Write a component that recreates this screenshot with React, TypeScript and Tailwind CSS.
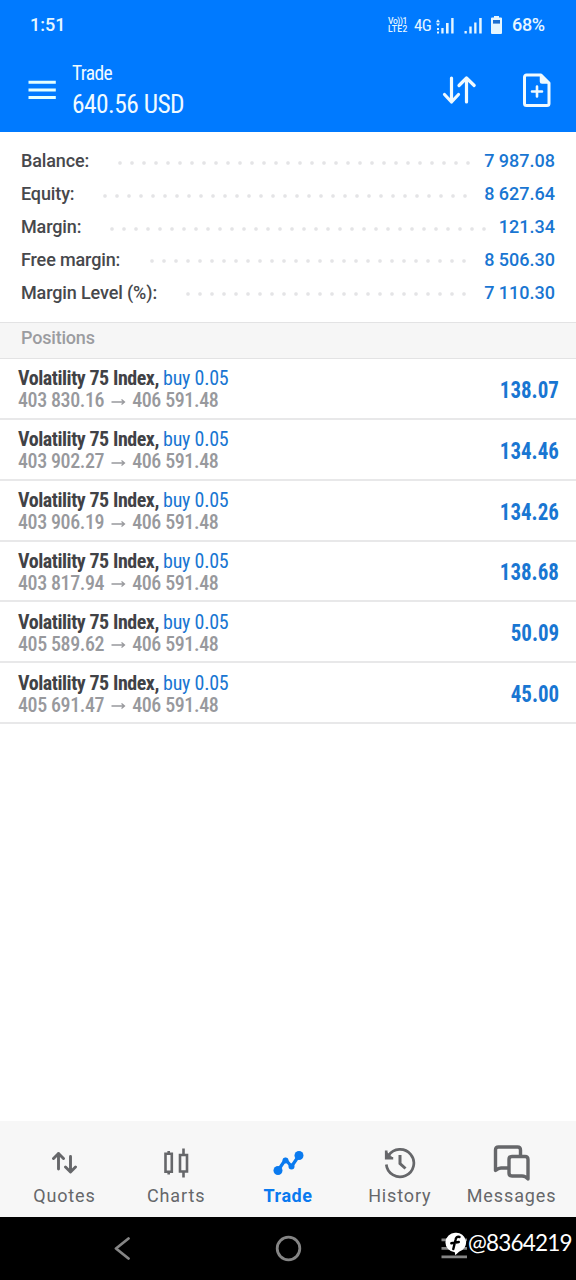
import React from 'react';

const summary = [
  { label: 'Balance:', value: '7 987.08', lead: 'w-[92.5px]', dots: 'w-[360px]' },
  { label: 'Equity:', value: '8 627.64', lead: 'w-[78px]', dots: 'w-[372px]' },
  { label: 'Margin:', value: '121.34', lead: 'w-[84.5px]', dots: 'w-[384px]' },
  { label: 'Free margin:', value: '8 506.30', lead: 'w-[124.5px]', dots: 'w-[324px]' },
  { label: 'Margin Level (%):', value: '7 110.30', lead: 'w-[160.5px]', dots: 'w-[288px]' },
];

const positions = [
  { open: '403 830.16', profit: '138.07' },
  { open: '403 902.27', profit: '134.46' },
  { open: '403 906.19', profit: '134.26' },
  { open: '403 817.94', profit: '138.68' },
  { open: '405 589.62', profit: '50.09' },
  { open: '405 691.47', profit: '45.00' },
];

const condensed = "font-['Roboto_Condensed','Roboto',sans-serif] [font-stretch:condensed]";

function StatusBar() {
  return (
    <div className="flex h-[50px] items-center pl-[30px] pr-[30px] text-[#e6f6ff]">
      <span className="text-[18px] font-medium leading-none">1:51</span>
      <div className="ml-auto flex items-center">
        <div className="flex w-[20px] flex-col whitespace-nowrap text-[8.5px] font-medium leading-[8px]">
          <span className="tracking-[-0.4px]">Vo))1</span>
          <span className="tracking-[0.3px]">LTE2</span>
        </div>
        <span className={`${condensed} ml-[6px] w-[17px] whitespace-nowrap text-[17px] leading-none tracking-[-0.7px]`}>4G</span>
        <svg className="ml-[5px] block" width="18" height="17" viewBox="0 0 18 17" fill="currentColor">
          <path d="M0 5.200 2 2.300l2 2.900zM0 6.600h4L2 9.200zM1 11h2v2H1zM1 14.500h2v2H1zM5.300 11h2.300v5.500H5.300zM10 6h2.600v10.500H10zM15.200 1h2.400v15.500h-2.400z" />
        </svg>
        <svg className="ml-[10px] block" width="18" height="17" viewBox="0 0 18 17" fill="currentColor">
          <path d="M0.500 14h2.300v2.500H0.500zM5.300 9.500h2.400v7H5.300zM10.200 5.500h2.300v11h-2.300zM15.200 1h2.500v15.500h-2.500z" />
        </svg>
        <svg className="ml-[8px] block" width="13" height="20" viewBox="0 0 13 20">
          <path d="M4 1h5v2H4zM2 2.600h9a1 1 0 0 1 1 1V18a1 1 0 0 1-1 1H2a1 1 0 0 1-1-1V3.600a1 1 0 0 1 1-1z" fill="currentColor" />
          <path d="M3 5h7v3.600H3z" fill="#1d6fd0" />
        </svg>
        <span className="ml-[9px] w-[34px] whitespace-nowrap text-[18px] font-medium leading-none tracking-[-0.3px]">68%</span>
      </div>
    </div>
  );
}

function Header() {
  return (
    <header className="h-[132px] bg-[#007aff]">
      <StatusBar />
      <div className="flex h-[82px] items-start text-[#f0faff]">
        <svg className="ml-[28px] mt-[30px]" width="28" height="21" viewBox="0 0 28 21" fill="#e2ffff">
          <path d="M0.500 0.800h27.300v3H0.500zM0.500 8.500h27.300v3H0.500zM0.500 16h27.300v3H0.500z" />
        </svg>
        <div className={`${condensed} ml-[16px] flex flex-col`}>
          <span className="mt-[12px] text-[19.5px] leading-[23px] tracking-[-0.6px]">Trade</span>
          <span className="mt-[4px] text-[25.5px] leading-[30px] tracking-[-0.55px]">640.56 USD</span>
        </div>
        <svg className="ml-auto mt-[25px]" width="36" height="30" viewBox="0 0 36 30" fill="none" stroke="currentColor" strokeWidth="3.200" strokeLinecap="round" strokeLinejoin="round">
          <path d="M10.500 3v24M3.500 19.500l7 7.500 7-7.500M25.500 27V3M18 10.500 25.500 3l7.700 7.500" />
        </svg>
        <svg className="ml-[45px] mr-[24px] mt-[22px]" width="30" height="36" viewBox="0 0 30 36" fill="none" stroke="currentColor" strokeWidth="3" strokeLinejoin="round">
          <path d="M4.500 3H19l8 8v20.500a2 2 0 0 1-2 2H4.500a2 2 0 0 1-2-2V5a2 2 0 0 1 2-2z" />
          <path d="M18.500 3v6.500q0 1.500 1.500 1.500h7z" fill="currentColor" strokeWidth="1.500" />
          <path d="M15 14.500v10M10 19.500h10" strokeLinecap="round" strokeWidth="2.600" />
        </svg>
      </div>
    </header>
  );
}

function Summary() {
  return (
    <section className="h-[190px] pl-[21px] pr-[21px] pt-[13px]">
      {summary.map((row) => (
        <div key={row.label} className="flex h-[32.850px] items-center text-[18px] font-medium leading-none">
          <span className={`${row.lead} shrink-0 whitespace-nowrap tracking-[-0.130px] text-[#47484c]`}>{row.label}</span>
          <span className={`${row.dots} mt-[3px] h-[6px] shrink-0 bg-[radial-gradient(circle,#e4e4e6_1.300px,transparent_2.300px)] bg-[length:12px_6px]`} />
          <span className="ml-auto whitespace-nowrap text-[#1976d2]">{row.value}</span>
        </div>
      ))}
    </section>
  );
}

function Positions() {
  return (
    <section>
      <div className="flex h-[37px] items-center border-y-[1.5px] border-[#e3e3e4] bg-[#f6f6f6] pb-[5px] pl-[21px] text-[18px] font-medium leading-none tracking-[-0.200px] text-[#9b9ca0]">
        Positions
      </div>
      {positions.map((p) => (
        <div key={p.open} className={`${condensed} flex h-[60.850px] items-center border-b-2 border-[#e8e8e9] pl-[18px] pr-[17px]`}>
          <div className="flex flex-col pt-[2px] leading-[22px]">
            <span className="whitespace-nowrap text-[20px] font-bold tracking-[-0.450px] text-[#414246]">
              Volatility 75 Index, <span className="font-normal tracking-[-0.250px] text-[#1976d2]">buy 0.05</span>
            </span>
            <span className="flex items-center whitespace-nowrap text-[20px] font-medium tracking-[-0.400px] text-[#98999d]">
              {p.open}
              <svg className="ml-[7px] mr-[6px] mt-[3px]" width="15" height="8" viewBox="0 0 15 8" fill="none" stroke="currentColor" strokeWidth="1.300">
                <path d="M0.500 4h13M10.500 1.500 13.500 4l-3 2.500" />
              </svg>
              406 591.48
            </span>
          </div>
          <span className="ml-auto origin-right scale-x-[0.910] pt-[4px] text-[23px] font-bold leading-none text-[#1976d2]">{p.profit}</span>
        </div>
      ))}
    </section>
  );
}

function QuotesIcon() {
  return (
    <svg width="26" height="24" viewBox="0 0 26 24" fill="none" stroke="currentColor" strokeWidth="2.900" strokeLinecap="round" strokeLinejoin="round">
      <path d="M7.500 18V2.500M2.500 7.500l5-5 5 5M19.500 5.500V21M14.500 16l5 5 5-5" />
    </svg>
  );
}

function ChartsIcon() {
  return (
    <svg width="26" height="30" viewBox="0 0 26 30" fill="none" stroke="currentColor" strokeWidth="2.600">
      <path d="M2.500 5.800h6.300v18H2.500zM5.700 3v3M5.700 23.500v3M17 7h7v16.500h-7zM20.500 0.500V7M20.500 23.500v6" />
    </svg>
  );
}

function TradeIcon() {
  return (
    <svg width="32" height="26" viewBox="0 0 32 26" fill="currentColor">
      <path d="M6 20.500 13.500 9.500l6 7L27 5.500" fill="none" stroke="currentColor" strokeWidth="3.200" strokeLinejoin="round" />
      <circle cx="6" cy="20.500" r="4.500" />
      <circle cx="13.500" cy="10.500" r="3" />
      <circle cx="19.500" cy="16.500" r="3" />
      <circle cx="27" cy="5.500" r="4.500" />
    </svg>
  );
}

function HistoryIcon() {
  return (
    <svg width="32" height="32" viewBox="0 0 32 32" fill="none" stroke="currentColor" strokeWidth="2.700">
      <path d="M2.300 17.500A13.800 13.800 0 1 0 4.500 8.500" />
      <path d="M2.200 3.500v7.700h7" strokeWidth="2.600" />
      <path d="M3 5.500v5h5z" fill="currentColor" strokeWidth="1" />
      <path d="M16 8v8.500l5.500 5" strokeWidth="3" />
    </svg>
  );
}

function MessagesIcon() {
  return (
    <svg className="-ml-[2px]" width="38" height="36" viewBox="0 0 38 36" fill="none" stroke="currentColor" strokeWidth="3.400" strokeLinejoin="round">
      <path d="M16.500 23H9q-2.500 0-5.500 2.500V5q0-3 3-3h19q3 0 3 3v5.500" />
      <path d="M20 11.500h13q3 0 3 3V34q-2.500-3-6-3H20q-3 0-3-3V14.500q0-3 3-3z" />
    </svg>
  );
}

const tabs = [
  { name: 'Quotes', icon: <QuotesIcon />, tone: 'text-[#66676a] tracking-[0.850px]' },
  { name: 'Charts', icon: <ChartsIcon />, tone: 'text-[#66676a] tracking-[0.900px]' },
  { name: 'Trade', icon: <TradeIcon />, tone: 'font-bold text-[#0a7aef] tracking-[0.500px]' },
  { name: 'History', icon: <HistoryIcon />, tone: 'text-[#66676a] tracking-[0.850px]' },
  { name: 'Messages', icon: <MessagesIcon />, tone: 'text-[#66676a] tracking-[0.900px]' },
];

function TabBar() {
  return (
    <nav className="flex h-[96px] justify-center bg-[#f7f7f7]">
      {tabs.map((tab) => (
        <div key={tab.name} className={`${tab.tone} flex w-[111.800px] flex-col items-center`}>
          <div className="mt-[22px] flex h-[40px] items-center">{tab.icon}</div>
          <span className="mt-[2px] text-[18px] leading-[22px]">{tab.name}</span>
        </div>
      ))}
    </nav>
  );
}

function SystemNav() {
  return (
    <div className="relative flex h-[63px] items-center bg-black text-[#858585]">
      <svg className="ml-[113px]" width="18" height="24" viewBox="0 0 18 24" fill="none" stroke="currentColor" strokeWidth="2.800" strokeLinecap="round" strokeLinejoin="round">
        <path d="M15.500 1.500 3 11.500l12.500 10" />
      </svg>
      <svg className="ml-[144px]" width="28" height="28" viewBox="0 0 28 28" fill="none" stroke="currentColor" strokeWidth="2.800">
        <circle cx="13.500" cy="13.500" r="11.300" />
      </svg>
      <svg className="ml-[138px]" width="27" height="22" viewBox="0 0 27 22" fill="none" stroke="currentColor" strokeWidth="2.800">
        <path d="M0.500 1.800h25.500M0.500 10.300h25.500M0.500 18.800h25.500" />
      </svg>
      <div className="absolute left-[445px] top-[13px] flex items-center text-white">
        <svg width="22" height="26" viewBox="0 0 22 26">
          <path d="M10.500 2.800a9.700 9.700 0 0 1 3.500 19L10.300 25.200 9.800 22.200A9.700 9.700 0 0 1 10.500 2.800z" fill="white" />
          <path d="M14.500 7q-3.500-1-4 3L8.300 19M6.300 13.300l7.500-1.300" fill="none" stroke="black" strokeWidth="2.400" strokeLinecap="round" />
        </svg>
        <span className="ml-[1px] whitespace-nowrap font-['Lato',sans-serif] text-[22.5px] leading-[26px] tracking-[-0.800px]">@8364219</span>
      </div>
    </div>
  );
}

export default function App() {
  return (
    <div className="flex h-[1280px] w-[576px] flex-col overflow-hidden bg-white font-['Roboto',sans-serif]">
      <Header />
      <Summary />
      <Positions />
      <div className="mt-auto">
        <TabBar />
        <SystemNav />
      </div>
    </div>
  );
}
